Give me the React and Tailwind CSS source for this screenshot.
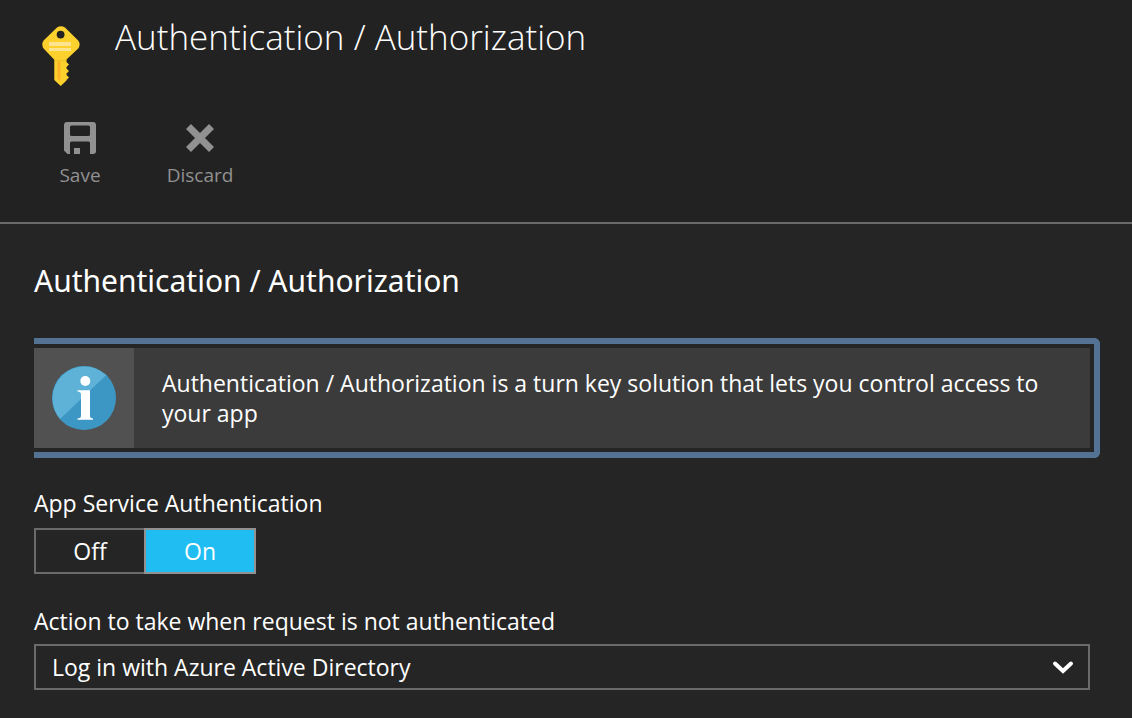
import React from "react";

function KeyIcon() {
  return (
    <svg width="38" height="62" viewBox="0 0 38 62" aria-hidden="true">
      <path
        d="M15 1.6 Q19 -1.2 23 1.6 L36.2 14.5 Q39 18.5 36.2 22.5 L24.5 33.5 V36 L27 38.5 L24.5 41 V42.5 L27 45 L24.5 47.5 V49 L27 51.5 L24.5 54 V54.5 L18.7 60 L12.3 54 V33.8 L1.6 22.5 Q-1 18.5 1.6 14.5 Z"
        fill="#fcd12e"
      />
      <path d="M15.5 35.5 H18.3 V55 L15.5 52.5 Z" fill="#ff9b26" opacity="0.6" />
      <path d="M12.3 34 H24.5 V35.2 H12.3 Z" fill="#e8b420" opacity="0.5" />
      <circle cx="18.6" cy="8.6" r="3.9" fill="#222222" />
      <path d="M7 16 H29 V20 H7 Z M7 22 H29 V25 H7 Z" fill="#fee48f" />
    </svg>
  );
}

function SaveIcon() {
  return (
    <svg width="32" height="32" viewBox="0 0 32 32" aria-hidden="true">
      <path
        fillRule="evenodd"
        fill="#919191"
        d="M3 0 H29 Q32 0 32 3 V29 Q32 32 29 32 H26 V21 Q26 19.500 24.500 19.500 H7.500 Q6 19.500 6 21 V32 H3.500 L0 28.500 V3 Q0 0 3 0 Z M7.500 3.500 Q6 3.500 6 5 V12.500 Q6 14 7.500 14 H24.500 Q26 14 26 12.500 V5 Q26 3.500 24.500 3.500 Z"
      />
      <path d="M10 26 H16 V32 H10 Z" fill="#919191" />
    </svg>
  );
}

function DiscardIcon() {
  return (
    <svg width="32" height="32" viewBox="0 0 32 32" aria-hidden="true">
      <path d="M4.500 4.500 L27.500 27.500 M27.500 4.500 L4.500 27.500" stroke="#919191" strokeWidth="7" />
    </svg>
  );
}

function InfoIcon() {
  return (
    <svg width="64" height="64" viewBox="0 0 64 64" aria-hidden="true">
      <circle cx="32" cy="32" r="32" fill="#3d97c5" />
      <path d="M54.3 9 A32 32 0 0 0 8 53 Z" fill="#5eb2d7" />
      <circle cx="33.300" cy="15" r="5" fill="#ffffff" />
      <path
        d="M25.500 24.200 H38 V50 Q38 52.300 41 52.500 V53.800 H25.500 V52.500 Q29 52.300 29 50 V28.500 Q29 26 25.500 25.600 Z"
        fill="#ffffff"
      />
    </svg>
  );
}

function Command({ icon, label }) {
  return (
    <button type="button" className="flex w-30 flex-col items-center gap-1 text-[19px] leading-[34px] text-[#919191]">
      {icon}
      <span>{label}</span>
    </button>
  );
}

function Toggle() {
  const [on, setOn] = React.useState(true);
  return (
    <div className="flex" role="group" aria-labelledby="service-auth">
      <button
        type="button"
        aria-pressed={!on}
        onClick={() => setOn(false)}
        className="h-[46px] w-28 border-2 border-[#6a6a6a]"
      >
        Off
      </button>
      <button
        type="button"
        aria-pressed={on}
        onClick={() => setOn(true)}
        className="-ml-0.5 h-[46px] w-28 border-2 border-[#919191] bg-[#20bdf2]"
      >
        On
      </button>
    </div>
  );
}

export default function App() {
  return (
    <div className="min-h-screen bg-[#252525] font-['Open_Sans','Noto_Sans',sans-serif] text-[23px] leading-[30px] text-white">
      <header className="border-b-2 border-[#6a6a6a] bg-[#222222] pb-[30px]">
        <div className="flex gap-[35px] pt-3 pl-[42px]">
          <div className="pt-[14px]">
            <KeyIcon />
          </div>
          <h1 className="text-[35px] leading-[50px] font-light">Authentication / Authorization</h1>
        </div>
        <div className="flex pt-[34px] pl-5">
          <Command icon={<SaveIcon />} label="Save" />
          <Command icon={<DiscardIcon />} label="Discard" />
        </div>
      </header>

      <main className="pt-9 pr-[42px] pb-7 pl-[34px]">
        <h2 className="font-['Noto_Sans',sans-serif] text-[30px] leading-[42px]">Authentication / Authorization</h2>

        <section className="mt-9 -mr-[10px] rounded-r-md border-y-6 border-r-6 border-[#537294] py-1 pr-1">
          <div className="flex bg-[#3b3b3b]">
            <div className="flex size-25 shrink-0 items-center justify-center bg-[#515151]">
              <InfoIcon />
            </div>
            <p className="px-7 py-5">
              Authentication / Authorization is a turn key solution that lets you control access to your app
            </p>
          </div>
        </section>

        <div className="mt-[30px]">
          <p id="service-auth" className="mb-2.5">App Service Authentication</p>
          <Toggle />
        </div>

        <div className="mt-8">
          <label htmlFor="unauthenticated-action" className="mb-2 block">
            Action to take when request is not authenticated
          </label>
          <div className="grid items-center">
            <select
              id="unauthenticated-action"
              className="col-start-1 row-start-1 h-[46px] w-full appearance-none border-2 border-[#6a6a6a] bg-[#252525] px-4"
            >
              <option>Log in with Azure Active Directory</option>
            </select>
            <svg
              className="pointer-events-none col-start-1 row-start-1 mr-4 justify-self-end"
              width="22"
              height="16"
              viewBox="0 0 22 16"
              aria-hidden="true"
            >
              <path d="M3 4.500 L11 12 L19 4.500" fill="none" stroke="#ffffff" strokeWidth="4" strokeLinecap="round" />
            </svg>
          </div>
        </div>
      </main>
    </div>
  );
}
